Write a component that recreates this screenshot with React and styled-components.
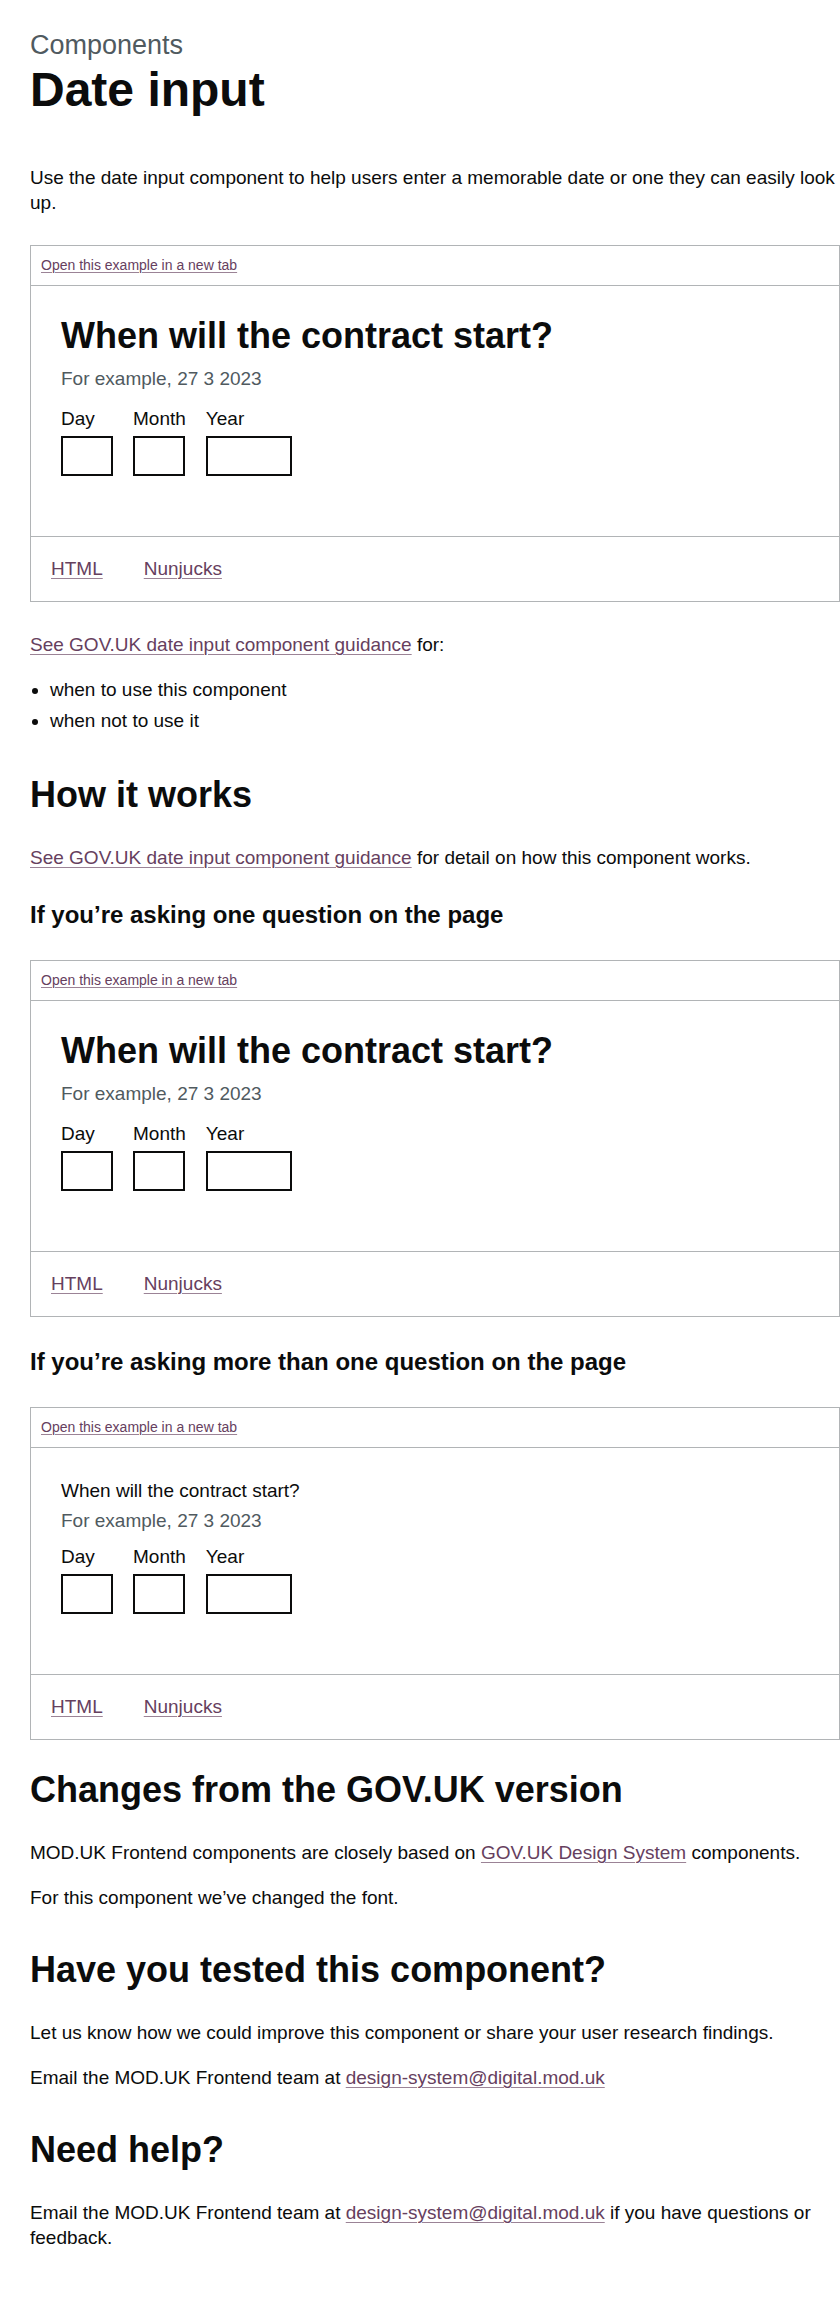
import styled, { createGlobalStyle } from 'styled-components';

const GlobalStyle = createGlobalStyle`
  html, body {
    margin: 0;
    padding: 0;
    background: #ffffff;
  }
  body {
    font-family: "Liberation Sans", Arial, sans-serif;
    color: #0b0c0c;
  }
`;

const Example = ({ large }) => (
  <ExampleBox>
    <Toolbar>
      <SmallLink href="#">Open this example in a new tab</SmallLink>
    </Toolbar>
    <Preview>
      <Fieldset>
        <Legend $large={large}>When will the contract start?</Legend>
        <Hint $large={large}>For example, 27 3 2023</Hint>
        <DateRow>
          <DateItem>
            <Label>Day</Label>
            <DateInput $width={52} />
          </DateItem>
          <DateItem>
            <Label>Month</Label>
            <DateInput $width={52} />
          </DateItem>
          <DateItem>
            <Label>Year</Label>
            <DateInput $width={86} />
          </DateItem>
        </DateRow>
      </Fieldset>
    </Preview>
    <Tabs>
      <TabLink href="#">HTML</TabLink>
      <TabLink href="#">Nunjucks</TabLink>
    </Tabs>
  </ExampleBox>
);

const App = () => {
  return (
    <>
      <GlobalStyle />
      <Page>
        <Caption>Components</Caption>
        <Title>Date input</Title>
        <Body>
          Use the date input component to help users enter a memorable date or one they can easily look up.
        </Body>

        <Example large />

        <Body>
          <Link href="#">See GOV.UK date input component guidance</Link> for:
        </Body>
        <BulletList>
          <li>when to use this component</li>
          <li>when not to use it</li>
        </BulletList>

        <Heading $top={42}>How it works</Heading>
        <Body>
          <Link href="#">See GOV.UK date input component guidance</Link> for detail on how this component works.
        </Body>

        <SubHeading>If you’re asking one question on the page</SubHeading>
        <Example large />

        <SubHeading>If you’re asking more than one question on the page</SubHeading>
        <Example />

        <Heading $top={30}>Changes from the GOV.UK version</Heading>
        <Body>
          MOD.UK Frontend components are closely based on <Link href="#">GOV.UK Design System</Link> components.
        </Body>
        <Body>For this component we’ve changed the font.</Body>

        <Heading>Have you tested this component?</Heading>
        <Body>Let us know how we could improve this component or share your user research findings.</Body>
        <Body>
          Email the MOD.UK Frontend team at <Link href="#">design-system@digital.mod.uk</Link>
        </Body>

        <Heading>Need help?</Heading>
        <Body>
          Email the MOD.UK Frontend team at <Link href="#">design-system@digital.mod.uk</Link> if you have questions or
          feedback.
        </Body>
      </Page>
      <Footer />
    </>
  );
};

export default App;

const Page = styled.main`
  display: flow-root;
  padding: 30px 0 50px 30px;
  width: 810px;
`;

const Caption = styled.span`
  display: block;
  margin-bottom: 5px;
  font-size: 27px;
  line-height: 30px;
  color: #505a5f;
`;

const Title = styled.h1`
  margin: 0 0 50px;
  font-size: 48px;
  line-height: 50px;
  font-weight: 700;
`;

const Heading = styled.h2`
  margin: ${(p) => p.$top ?? 40}px 0 30px;
  font-size: 36px;
  line-height: 40px;
  font-weight: 700;
`;

const SubHeading = styled.h3`
  margin: 30px 0 20px;
  font-size: 24px;
  line-height: 30px;
  font-weight: 700;
`;

const Body = styled.p`
  margin: 0 0 20px;
  font-size: 19px;
  line-height: 25px;
`;

const Link = styled.a`
  color: #66405e;
  text-decoration: underline;
  text-decoration-thickness: 1px;
  text-decoration-color: rgba(102, 64, 94, 0.65);
  text-underline-offset: 0.1578em;
`;

const BulletList = styled.ul`
  margin: 0 0 20px;
  padding-left: 20px;
  list-style-type: disc;
  font-size: 19px;
  line-height: 25px;

  li {
    margin-bottom: 6px;
  }
`;

const ExampleBox = styled.div`
  margin: 30px 0;
  border: 1px solid #b1b4b6;
`;

const Toolbar = styled.div`
  padding: 10px;
  font-size: 14px;
  line-height: 19px;
`;

const SmallLink = styled(Link)`
  font-size: 14px;
`;

const Preview = styled.div`
  padding: 30px;
  border-top: 1px solid #b1b4b6;
`;

const Fieldset = styled.fieldset`
  margin: 0 0 30px;
  padding: 0;
  border: 0;
  min-width: 0;
`;

const Legend = styled.legend`
  display: block;
  padding: 0;
  margin-bottom: ${(p) => (p.$large ? '10px' : '5px')};
  font-size: ${(p) => (p.$large ? '36px' : '19px')};
  line-height: ${(p) => (p.$large ? '40px' : '25px')};
  font-weight: ${(p) => (p.$large ? 700 : 400)};
`;

const Hint = styled.div`
  margin-bottom: ${(p) => (p.$large ? '15px' : '11px')};
  font-size: 19px;
  line-height: 25px;
  color: #505a5f;
`;

const DateRow = styled.div`
  display: flex;
  gap: 20px;
`;

const DateItem = styled.div`
  display: flex;
  flex-direction: column;
`;

const Label = styled.label`
  display: block;
  margin-bottom: 5px;
  font-size: 19px;
  line-height: 25px;
`;

const DateInput = styled.input.attrs({ type: 'text' })`
  box-sizing: border-box;
  width: ${(p) => p.$width}px;
  height: 40px;
  margin: 0;
  padding: 5px;
  border: 2px solid #0b0c0c;
  border-radius: 0;
  font-family: inherit;
  font-size: 19px;
  background: #ffffff;
`;

const Tabs = styled.div`
  display: flex;
  gap: 41px;
  padding: 19px 20px 20px;
  border-top: 1px solid #b1b4b6;
  font-size: 19px;
  line-height: 25px;
`;

const TabLink = styled(Link)``;

const Footer = styled.footer`
  height: 120px;
  border-top: 1px solid #e6e6e6;
  background: #ffffff;
`;
